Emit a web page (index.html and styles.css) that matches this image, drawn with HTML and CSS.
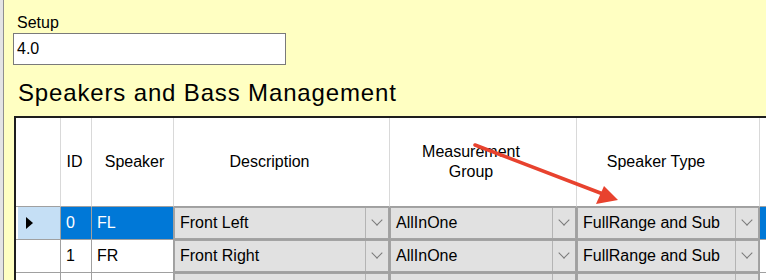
FILE: index.html
```html
<!DOCTYPE html>
<html lang="en">
<head>
  <meta charset="UTF-8">
  <title>Speakers and Bass Management</title>
  <link rel="stylesheet" href="styles.css">
</head>
<body>
  <div class="window">
    <div class="panel">
      <div class="field-label">Setup</div>
      <div class="field">4.0</div>
      <h2 class="section-title">Speakers and Bass Management</h2>

      <div class="grid-wrap">
        <div class="datagrid">
          <div class="hdr hdr-row"></div>
          <div class="hdr hdr-id">ID</div>
          <div class="hdr hdr-speaker">Speaker</div>
          <div class="hdr hdr-wide">Description</div>
          <div class="hdr hdr-wide">Measurement<br>Group</div>
          <div class="hdr hdr-wide">Speaker Type</div>
          <div class="hdr hdr-last"></div>

          <div class="cell rowhead selected-head"><span class="pointer"></span></div>
          <div class="cell selected">0</div>
          <div class="cell selected">FL</div>
          <div class="cell combo-cell"><div class="combo"><span class="combo-text">Front Left</span><span class="combo-btn"><span class="chev"></span></span></div></div>
          <div class="cell combo-cell"><div class="combo"><span class="combo-text">AllInOne</span><span class="combo-btn"><span class="chev"></span></span></div></div>
          <div class="cell combo-cell"><div class="combo"><span class="combo-text">FullRange and Sub</span><span class="combo-btn"><span class="chev"></span></span></div></div>
          <div class="cell selected last"></div>

          <div class="cell rowhead"></div>
          <div class="cell">1</div>
          <div class="cell">FR</div>
          <div class="cell combo-cell"><div class="combo"><span class="combo-text">Front Right</span><span class="combo-btn"><span class="chev"></span></span></div></div>
          <div class="cell combo-cell"><div class="combo"><span class="combo-text">AllInOne</span><span class="combo-btn"><span class="chev"></span></span></div></div>
          <div class="cell combo-cell"><div class="combo"><span class="combo-text">FullRange and Sub</span><span class="combo-btn"><span class="chev"></span></span></div></div>
          <div class="cell last"></div>

          <div class="cell rowhead"></div>
          <div class="cell"></div>
          <div class="cell"></div>
          <div class="cell combo-cell"><div class="combo"><span class="combo-text"></span><span class="combo-btn"></span></div></div>
          <div class="cell combo-cell"><div class="combo"><span class="combo-text"></span><span class="combo-btn"></span></div></div>
          <div class="cell combo-cell"><div class="combo"><span class="combo-text"></span><span class="combo-btn"></span></div></div>
          <div class="cell last"></div>
        </div>
      </div>
    </div>
  </div>

  <!-- annotation arrow drawn over the grid -->
  <svg class="arrow" width="766" height="280" viewBox="0 0 766 280">
    <line x1="475" y1="145" x2="603" y2="194" stroke="#e8422e" stroke-width="3.5" stroke-linecap="round"/>
    <polygon points="618,200 596,204 604,186" fill="#e8422e"/>
  </svg>
</body>
</html>
```

FILE: styles.css
```css
html, body {
  margin: 0;
  padding: 0;
}

body {
  width: 766px;
  height: 280px;
  overflow: hidden;
  position: relative;
  font-family: 'Liberation Sans', Arial, sans-serif;
  font-size: 16px;
  color: #000;
  background: #e4e4e4;
}

.window {
  height: 100%;
  padding-left: 3px;
}

.panel {
  height: 100%;
  box-sizing: border-box;
  display: flex;
  flex-direction: column;
  background: #ffffc2;
  border-left: 1px solid #8f8f8f;
  padding: 14px 0 0 9px;
}

.field-label {
  line-height: 18px;
  margin-left: 4px;
}

.field {
  margin-top: 1px;
  width: 273px;
  height: 32px;
  box-sizing: border-box;
  background: #fff;
  border: 1px solid #7a7a7a;
  line-height: 30px;
  padding-left: 3px;
}

.section-title {
  margin: 14px 0 0 5px;
  font-size: 24px;
  font-weight: normal;
  line-height: 28px;
  letter-spacing: 0.85px;
}

/* DataGridView */
.grid-wrap {
  flex: 1;
  min-height: 0;
  overflow: hidden;
  margin-top: 9px;
  margin-left: 1px;
  background: #fff;
  border-top: 2px solid #1e1e1e;
  border-left: 2px solid #1e1e1e;
}

.datagrid {
  display: grid;
  grid-template-columns: 45px 31px 82px 216px 187px 183px 1fr;
  grid-template-rows: 89px 33px 33px 33px;
}

.hdr {
  box-sizing: border-box;
  border-right: 1px solid #d9d9d9;
  border-bottom: 1px solid #a0a0a0;
  display: flex;
  align-items: center;
  justify-content: center;
  text-align: center;
  line-height: 20px;
}

.hdr-wide {
  padding-right: 24px;
}

.hdr-id {
  padding-right: 3px;
}

.hdr-speaker {
  padding-left: 4px;
}

.hdr-last {
  border-right: none;
}

.cell {
  box-sizing: border-box;
  border-right: 1px solid #a0a0a0;
  border-bottom: 1px solid #a0a0a0;
  display: flex;
  align-items: center;
  padding-left: 5px;
  white-space: nowrap;
  overflow: hidden;
}

.cell.last {
  border-right: none;
}

.rowhead {
  padding-left: 10px;
}

.selected-head {
  background: linear-gradient(to right, #fff 0 2px, #c5dff5 2px);
}

.pointer {
  width: 0;
  height: 0;
  border-top: 6.5px solid transparent;
  border-bottom: 6.5px solid transparent;
  border-left: 7px solid #000;
}

.selected {
  background: #0078d7;
  color: #fff;
}

.combo-cell {
  padding: 0;
  align-items: stretch;
}

.combo {
  flex: 1;
  display: flex;
  background: #e1e1e1;
  border: 1px solid #a3a3a3;
}

.combo-text {
  flex: 1;
  padding-left: 5px;
  display: flex;
  align-items: center;
}

.combo-btn {
  width: 22px;
  border-left: 1px solid #b4b4b4;
  display: flex;
  align-items: center;
  justify-content: center;
}

.chev {
  width: 7px;
  height: 7px;
  border-right: 1px solid #7a7a7a;
  border-bottom: 1px solid #7a7a7a;
  transform: translateY(-3px) rotate(45deg);
}

.arrow {
  position: absolute;
  left: 0;
  top: 0;
  pointer-events: none;
}
```
